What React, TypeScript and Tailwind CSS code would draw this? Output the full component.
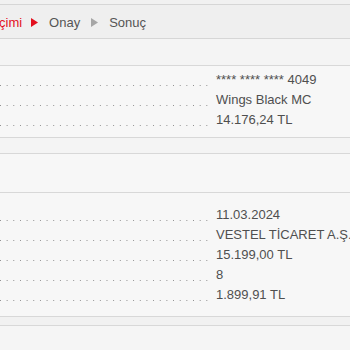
import React from "react";

function Row({ value }: { value: React.ReactNode }) {
  return (
    <div className="flex h-[20px] items-center">
      <div className="w-[211px] shrink-0 self-start mt-[15px] h-[1px] bg-[linear-gradient(to_right,#8f8f8f_1px,transparent_1px)] bg-[length:6.67px_1px] bg-repeat-x" />
      <div className="ml-[5px] whitespace-nowrap text-[13px] leading-[20px] text-[#4f4f4f]">
        {value}
      </div>
    </div>
  );
}

function Triangle({ color }: { color: string }) {
  return (
    <svg width="7" height="9" viewBox="0 0 7 9" className="shrink-0">
      <path d="M0 0 L7 4.5 L0 9 Z" fill={color} />
    </svg>
  );
}

export default function App() {
  return (
    <div className="w-[350px] h-[350px] overflow-hidden bg-[#f4f4f4] font-['Liberation_Sans',Arial,sans-serif]">
      <div className="h-[4px] bg-[#f1f1f1]" />
      <div className="flex h-[35px] items-center border-y border-[#d6d6d6] bg-[#efefef] text-[13px] pt-[2px]">
        <span className="ml-[-1px] text-[#e3101e]">çimi</span>
        <span className="ml-[9px] flex">
          <Triangle color="#e3101e" />
        </span>
        <span className="ml-[11px] text-[#555]">Onay</span>
        <span className="ml-[11px] flex">
          <Triangle color="#a6a6a6" />
        </span>
        <span className="ml-[11px] text-[#555]">Sonuç</span>
      </div>
      <div className="h-[26px]" />
      <div className="border-y border-[#d8d8d8] bg-[#f7f7f7] pt-[4px] pb-[7px]">
        <Row value="**** **** **** 4049" />
        <Row value="Wings Black MC" />
        <Row value="14.176,24 TL" />
      </div>
      <div className="h-[15px]" />
      <div className="border-y border-[#d8d8d8] bg-[#f7f7f7]">
        <div className="h-[39px] border-b border-[#d8d8d8]" />
        <div className="pt-[12px] pb-[11px]">
          <Row value="11.03.2024" />
          <Row value="VESTEL TİCARET A.Ş." />
          <Row value="15.199,00 TL" />
          <Row value="8" />
          <Row value="1.899,91 TL" />
        </div>
      </div>
      <div className="h-[8px] bg-[#f1f1f1]" />
      <div className="h-[30px] border-t border-[#d8d8d8] bg-[#f5f5f5]" />
    </div>
  );
}
